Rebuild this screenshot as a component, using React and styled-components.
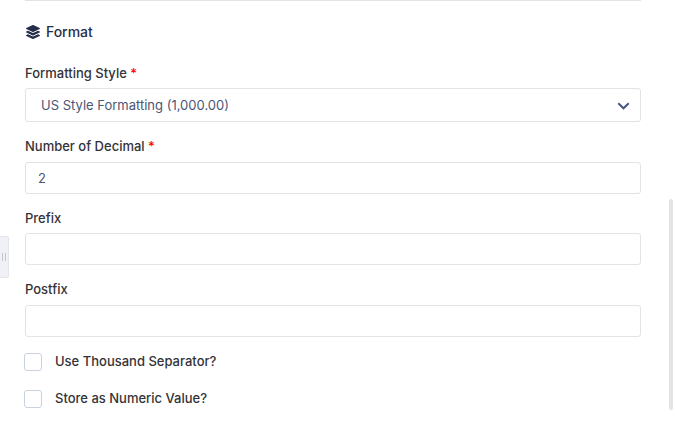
import styled, { createGlobalStyle } from "styled-components"

import React, { useState } from 'react';
import { FaLayerGroup } from 'react-icons/fa';


function Field({ label, required, children }) {
  return (
    <FieldGroup>
      <Label>{label}{required && <Star> *</Star>}</Label>
      {children}
    </FieldGroup>
  );
}

function CheckOption({ label }) {
  const [checked, setChecked] = useState(false);

  return (
    <CheckRow>
      <Checkbox type="checkbox" checked={checked} onChange={(e) => setChecked(e.target.checked)} />
      <CheckText>{label}</CheckText>
    </CheckRow>
  );
}

function App() {

  const [decimals, setDecimals] = useState('2');
  const [prefix, setPrefix] = useState('');
  const [postfix, setPostfix] = useState('');

  return (
    <Page>
      <GlobalStyle />
      <Gutter>
        <Handle><Grip /><Grip /></Handle>
      </Gutter>
      <Form>
        <Heading><FaLayerGroup size={14} color="#252f4a" />Format</Heading>
        <Field label="Formatting Style" required>
          <Select>
            US Style Formatting (1,000.00)
            <Chevron width="13" height="8" viewBox="0 0 13 8" fill="none">
              <path d="M1.3 1.2L6.5 6.3L11.7 1.2" stroke="#475583" strokeWidth="1.9" />
            </Chevron>
          </Select>
        </Field>
        <Field label="Number of Decimal" required>
          <Input value={decimals} onChange={(e) => setDecimals(e.target.value)} />
        </Field>
        <Field label="Prefix">
          <Input value={prefix} onChange={(e) => setPrefix(e.target.value)} />
        </Field>
        <Field label="Postfix">
          <Input value={postfix} onChange={(e) => setPostfix(e.target.value)} />
        </Field>
        <Checks>
          <CheckOption label="Use Thousand Separator?" />
          <CheckOption label="Store as Numeric Value?" />
        </Checks>
      </Form>
      <ScrollTrack>
        <ScrollThumb />
      </ScrollTrack>
    </Page>
  );
}

export default App;


const GlobalStyle = createGlobalStyle`
  * {
    box-sizing: border-box;
  }
  body {
    margin: 0;
    background: #fff;
    font-family: Inter, "Liberation Sans", sans-serif;
    font-size: 13px;
    color: #333338;
  }
`

const Page = styled.div`
  display: flex;
  width: 675px;
  height: 440px;
  overflow: hidden;
`

const Gutter = styled.div`
  width: 25px;
  padding-top: 236px;
`

const Handle = styled.div`
  display: flex;
  align-items: center;
  justify-content: flex-end;
  gap: 2px;
  width: 9px;
  height: 42px;
  padding-right: 2px;
  background: #f0f1f6;
  border: 1px solid #e4e5e8;
  border-left: none;
  border-radius: 0 2px 2px 0;
`

const Grip = styled.span`
  width: 1px;
  height: 8px;
  background: #c6c4cc;
`

const Form = styled.div`
  width: 616px;
  border-top: 1px solid #e3e3e3;
`

const Heading = styled.div`
  display: flex;
  align-items: center;
  gap: 6px;
  height: 20px;
  margin: 20px 0 21.5px;
  padding-left: 1px;
  font-size: 14px;
  font-weight: 500;
  letter-spacing: -0.05px;
  color: #252f4a;

  svg {
    margin-top: 2px;
  }
`

const FieldGroup = styled.div`
  display: flex;
  flex-direction: column;
  gap: 5.5px;
  margin-bottom: 14px;
`

const Label = styled.label`
  height: 20px;
  line-height: 20px;
  font-weight: 500;
`

const Star = styled.span`
  color: #ff0000;
`

const Select = styled.div`
  display: flex;
  align-items: center;
  justify-content: space-between;
  height: 34px;
  padding: 0 10px 0 15px;
  border: 1px solid #e3e3e3;
  border-radius: 3px;
  color: #4b5675;
`

const Chevron = styled.svg`
  margin-top: 2px;
`

const Input = styled.input`
  width: 100%;
  height: 32px;
  padding: 0 12px;
  border: 1px solid #e3e3e3;
  border-radius: 3px;
  outline: none;
  font: inherit;
  color: #4b5675;
`

const Checks = styled.div`
  display: flex;
  flex-direction: column;
  gap: 19px;
  margin: 16px 0 0 -1px;
`

const CheckRow = styled.label`
  display: flex;
  align-items: center;
  gap: 13px;
  height: 18px;
  font-weight: 500;
`

const CheckText = styled.span`
  padding-bottom: 2px;
`

const Checkbox = styled.input`
  appearance: none;
  width: 18px;
  height: 18px;
  margin: 0;
  border: 1px solid #c9d3e0;
  border-radius: 3px;

  &:checked {
    background: #4b5675;
  }
`

const ScrollTrack = styled.div`
  width: 4px;
  margin-left: 28px;
  padding-top: 199px;
`

const ScrollThumb = styled.div`
  height: 211px;
  border-radius: 2px;
  background: #e3e3e3;
`
